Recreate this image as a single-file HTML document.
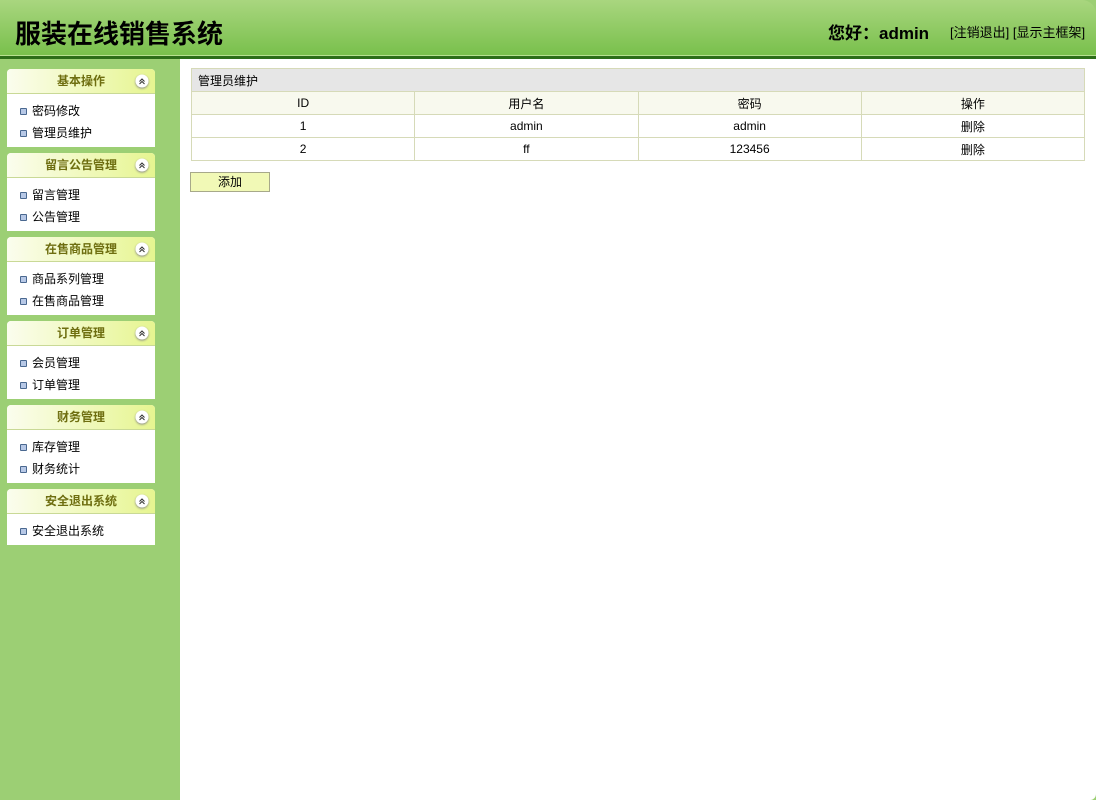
<!DOCTYPE html>
<html><head><meta charset="utf-8"><style>
*{margin:0;padding:0;box-sizing:border-box}
body{width:1096px;height:800px;overflow:hidden;background:#9ccf74;font-family:"Liberation Sans","Noto Sans CJK SC",sans-serif;font-size:12px;color:#000;position:relative}
#hd{position:absolute;left:0;top:0;width:1096px;height:55px;background:linear-gradient(#a9d67f,#79c04c);border-top-right-radius:14px}
#hd .t{position:absolute;left:15px;top:14px;font-size:26px;font-weight:bold}
#hd .u{position:absolute;left:828px;top:19px;font-size:17px;font-weight:bold}
#hd .l{position:absolute;left:950px;top:22px;font-size:13px}
#line{position:absolute;left:0;top:55px;width:1096px;height:4px;background:#2c6d18;border-top:1px solid #b7e08f}
#main{position:absolute;left:180px;top:59px;width:916px;height:741px;background:#fff;border-bottom-right-radius:6px}
.p{position:absolute;left:7px;width:148px;background:#fff;border-radius:4px 4px 0 0}
.p .h{height:25px;background:linear-gradient(90deg,#fbfdee,#e6f590);border-bottom:1px solid #c9d996;border-radius:4px 4px 0 0;text-align:center;line-height:24px;font-weight:bold;color:#6e6e10;font-size:12px;position:relative}
.p .h svg{position:absolute;right:6px;top:5px;width:14px;height:14px;filter:drop-shadow(0 1px 1px #888)}
.p ul{list-style:none;padding:6px 0 3px 0}
.p li{height:22px;line-height:22px;padding-left:25px;position:relative}
.p li:before{content:"";position:absolute;left:13px;top:8px;width:5px;height:5px;border:1px solid #4a6890;background:#b7c8e6;border-radius:1px}
table{position:absolute;left:11px;top:9px;width:894px;border-collapse:collapse;table-layout:fixed}
td{border:1px solid #d6dab8;height:23px;text-align:center}
td.c{background:#e6e6e6;text-align:left;padding-left:6px;height:23px}
tr.th td{background:#f8f9ee}
.btn{position:absolute;left:10px;top:113px;width:80px;height:20px;background:#f1f9b6;border:1px solid #a7a98a;text-align:center;line-height:18px}
</style></head><body>
<svg width="0" height="0" style="position:absolute"><defs><symbol id="ic" viewBox="0 0 14 14"><circle cx="7" cy="7" r="6.5" fill="#fff"/><path d="M4.5 7.5L7 5L9.5 7.5M4.5 10L7 7.5L9.5 10" fill="none" stroke="#333" stroke-width="1"/></symbol></defs></svg>
<div id="hd"><div class="t">服装在线销售系统</div><div class="u">您好：admin</div><div class="l">[注销退出] [显示主框架]</div></div>
<div id="line"></div>
<div class="p" style="top:69px;height:78px"><div class="h">基本操作<svg><use href="#ic"/></svg></div><ul><li>密码修改</li><li>管理员维护</li></ul></div>
<div class="p" style="top:153px;height:78px"><div class="h">留言公告管理<svg><use href="#ic"/></svg></div><ul><li>留言管理</li><li>公告管理</li></ul></div>
<div class="p" style="top:237px;height:78px"><div class="h">在售商品管理<svg><use href="#ic"/></svg></div><ul><li>商品系列管理</li><li>在售商品管理</li></ul></div>
<div class="p" style="top:321px;height:78px"><div class="h">订单管理<svg><use href="#ic"/></svg></div><ul><li>会员管理</li><li>订单管理</li></ul></div>
<div class="p" style="top:405px;height:78px"><div class="h">财务管理<svg><use href="#ic"/></svg></div><ul><li>库存管理</li><li>财务统计</li></ul></div>
<div class="p" style="top:489px;height:56px"><div class="h">安全退出系统<svg><use href="#ic"/></svg></div><ul><li>安全退出系统</li></ul></div>
<div id="main">
<table>
<tr><td class="c" colspan="4">管理员维护</td></tr>
<tr class="th"><td>ID</td><td>用户名</td><td>密码</td><td>操作</td></tr>
<tr><td>1</td><td>admin</td><td>admin</td><td>删除</td></tr>
<tr><td>2</td><td>ff</td><td>123456</td><td>删除</td></tr>
</table>
<div class="btn">添加</div>
</div>
</body></html>
